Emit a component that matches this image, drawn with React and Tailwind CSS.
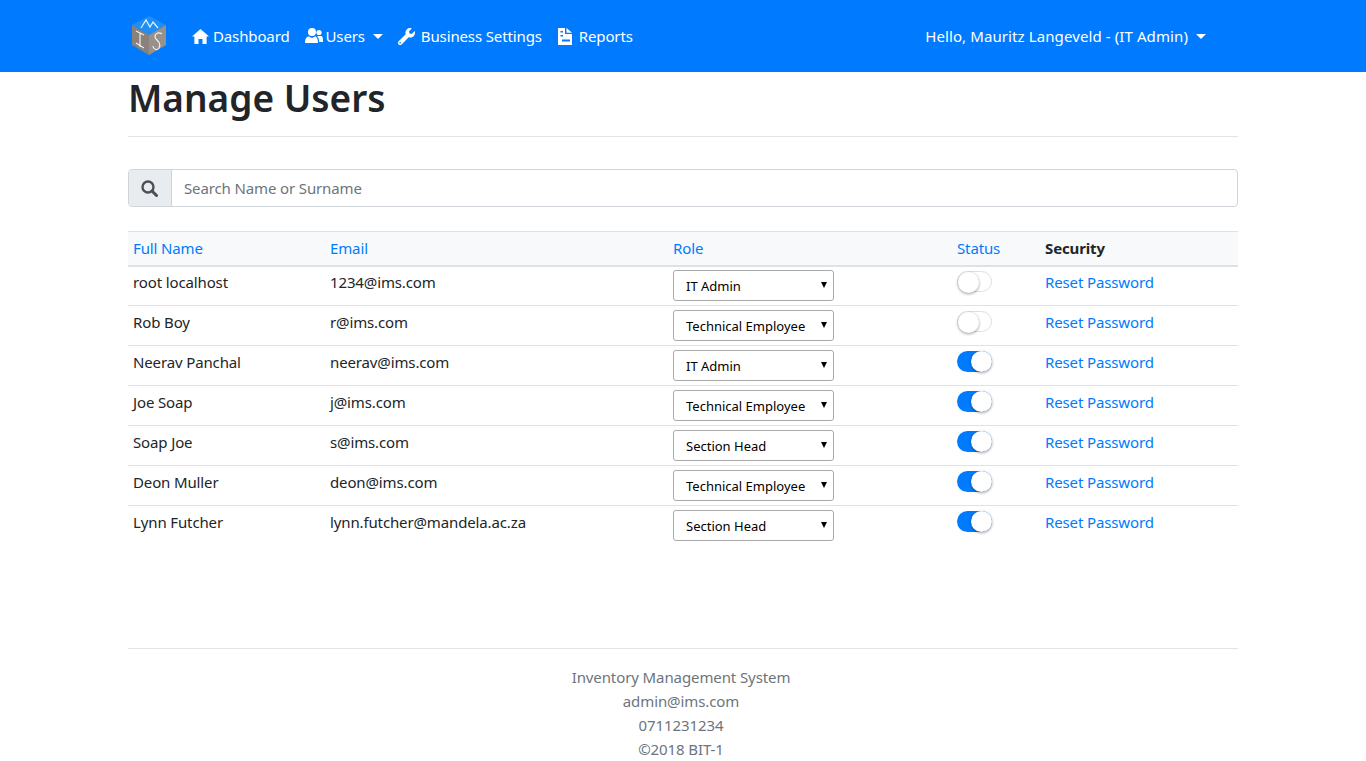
import { FaWrench } from "react-icons/fa";

const USERS = [
  { name: "root localhost", email: "1234@ims.com", role: "IT Admin", active: false },
  { name: "Rob Boy", email: "r@ims.com", role: "Technical Employee", active: false },
  { name: "Neerav Panchal", email: "neerav@ims.com", role: "IT Admin", active: true },
  { name: "Joe Soap", email: "j@ims.com", role: "Technical Employee", active: true },
  { name: "Soap Joe", email: "s@ims.com", role: "Section Head", active: true },
  { name: "Deon Muller", email: "deon@ims.com", role: "Technical Employee", active: true },
  { name: "Lynn Futcher", email: "lynn.futcher@mandela.ac.za", role: "Section Head", active: true },
];

const ROLES = ["IT Admin", "Technical Employee", "Section Head"];

function Logo() {
  return (
    <svg width="36" height="40" viewBox="0 0 36 40" className="shrink-0">
      <polygon points="18,0 35,9 18,19 1,9" fill="#1f8ff5" />
      <polygon points="1,9 18,19 18,39 1,29" fill="#8a817b" />
      <polygon points="35,9 18,19 18,39 35,29" fill="#98908a" />
      <path d="M10 12 L15 4 L19 11 L22 6 L27 12" fill="none" stroke="#e6f3ff" strokeWidth="1.2" />
      <path d="M5 15 L13 19 M9 17 L9 31 M5 27 L13 32" fill="none" stroke="#efefef" strokeWidth="1.2" />
      <path d="M31 18 C27 15 22 19 25 23 C28 26 30 28 28 32 C26 35 22 33 22 30" fill="none" stroke="#efefef" strokeWidth="1.2" />
    </svg>
  );
}

function HomeIcon() {
  return (
    <svg width="17" height="15" viewBox="0 0 17 15" className="mr-[4px] shrink-0" fill="currentColor">
      <path d="M8.5 0 L17 7.6 H14.6 V15 H10.5 V10 H6.5 V15 H2.4 V7.6 H0 Z" />
    </svg>
  );
}

function UsersIcon() {
  return (
    <svg width="18" height="16" viewBox="0 0 18 16" className="mr-[3px] shrink-0" fill="currentColor">
      <circle cx="7" cy="4" r="4" />
      <path d="M0 15 C0 10 2 8.5 4 8.5 L7 10 L10 8.5 C11.5 8.5 13 10 13 15 Z" />
      <circle cx="14" cy="4.5" r="2.6" />
      <path d="M12 8 H16 C17.5 8 18 9.5 18 14 H14.2 C14.2 11.5 13.5 9.5 12 8 Z" />
    </svg>
  );
}

function ReportIcon() {
  return (
    <svg width="14" height="17" viewBox="0 0 14 17" className="mr-[7px] shrink-0">
      <path fillRule="evenodd" fill="currentColor" d="M0 0 H7 V6 H14 V17 H0 Z M2.5 3 V4.5 H5 V3 Z M2.5 7 V8.5 H5 V7 Z M4 11.5 V13.5 H12 V11.5 Z" />
      <path fill="currentColor" d="M8.5 0 L14 4.8 H8.5 Z" />
    </svg>
  );
}

function SearchIcon() {
  return (
    <svg width="17" height="17" viewBox="0 0 17 17" fill="none" stroke="currentColor">
      <circle cx="7" cy="7" r="5.5" strokeWidth="2.4" />
      <path d="M11 11 L15.5 15.5" strokeWidth="3" strokeLinecap="round" />
    </svg>
  );
}

function NavLink({ icon, children, caret, className = "pr-2" }) {
  return (
    <a href="#" className={`flex items-center text-white pl-2 whitespace-nowrap ${className}`}>
      {icon}
      <span>{children}</span>
      {caret ? <Caret /> : null}
    </a>
  );
}

function Caret() {
  return <span className="ml-[8px] inline-block w-0 h-0 border-x-[5px] border-x-transparent border-t-[5px] border-t-white" />;
}

function Toggle({ on }) {
  return (
    <div className={`relative w-[35px] h-[21px] rounded-full ${on ? "bg-[#007bff]" : "bg-white border border-[#dfdfdf]"}`}>
      <div
        className={`absolute top-0 w-[21px] h-[21px] rounded-full bg-white shadow-[0_1px_3px_rgba(0,0,0,0.4)] ${on ? "right-0" : "left-0 -top-px"}`}
      />
    </div>
  );
}

function RoleSelect({ value }) {
  return (
    <div className="relative w-[161px] h-[31px]">
      <select
        defaultValue={value}
        className="appearance-none w-full h-full rounded-[3px] border border-[#a9a9a9] bg-white pl-3 text-[13px] tracking-normal text-black outline-none"
      >
        {ROLES.map((r) => (
          <option key={r}>{r}</option>
        ))}
      </select>
      <span className="absolute right-[7px] top-[12px] w-0 h-0 border-x-[3px] border-x-transparent border-t-[6px] border-t-black" />
    </div>
  );
}

export default function App() {
  return (
    <div className="font-['Noto_Sans',sans-serif] text-[15px] tracking-[-0.13px] leading-6 text-[#212529] bg-white min-h-[761px]">
      <nav className="bg-[#007bff] h-[72px] flex items-center">
        <div className="w-[1110px] mx-auto flex items-center">
          <div className="ml-[3px] mr-[17px]">
            <Logo />
          </div>
          <NavLink icon={<HomeIcon />} className="pr-[7px]">Dashboard</NavLink>
          <NavLink icon={<UsersIcon />} caret className="pr-[7px]">Users</NavLink>
          <NavLink icon={<FaWrench className="w-[17px] h-[17px] mr-[6px]" />}>Business Settings</NavLink>
          <NavLink icon={<ReportIcon />}>Reports</NavLink>
          <a href="#" className="ml-auto mr-[32px] flex items-center text-white tracking-[0.1px]">
            Hello, Mauritz Langeveld - (IT Admin)
            <Caret />
          </a>
        </div>
      </nav>

      <main className="w-[1110px] mx-auto">
        <h1 className="text-[37px] leading-[48px] tracking-normal font-semibold mt-[2px] pb-[14px] border-b border-[#e2e3e5]">Manage Users</h1>

        <div className="flex h-[38px] mt-[32px] rounded-[4px] border border-[#ced4da]">
          <div className="w-[43px] shrink-0 flex items-center justify-center bg-[#e9ecef] border-r border-[#ced4da] rounded-l-[4px] text-[#495057] pr-[2px]">
            <SearchIcon />
          </div>
          <input
            placeholder="Search Name or Surname"
            className="flex-1 px-3 outline-none rounded-r-[4px] placeholder:text-[#6c757d]"
          />
        </div>

        <table className="w-full mt-[24px] border-collapse table-fixed">
          <colgroup>
            <col className="w-[197px]" />
            <col className="w-[343px]" />
            <col className="w-[284px]" />
            <col className="w-[88px]" />
            <col />
          </colgroup>
          <thead>
            <tr className="h-[34px] bg-[#f8f9fa] border-t border-[#dee2e6] border-b-2">
              {["Full Name", "Email", "Role", "Status"].map((h) => (
                <th key={h} className="text-left font-normal px-[5px] pb-[1px] text-[#007bff]">
                  <a href="#">{h}</a>
                </th>
              ))}
              <th className="text-left font-bold px-[5px] pb-[1px]">Security</th>
            </tr>
          </thead>
          <tbody>
            {USERS.map((u) => (
              <tr key={u.name} className="h-[40px] border-t border-[#dee2e6] first:border-t-0">
                <td className="px-[5px] pb-[8px]">{u.name}</td>
                <td className="px-[5px] pb-[8px]">{u.email}</td>
                <td className="px-[5px]"><RoleSelect value={u.role} /></td>
                <td className="px-[5px] pb-[8px]"><Toggle on={u.active} /></td>
                <td className="px-[5px] pb-[8px]"><a href="#" className="text-[#007bff]">Reset Password</a></td>
              </tr>
            ))}
          </tbody>
        </table>

        <footer className="mt-[102px] border-t border-[#e2e3e5] pt-[16px] pr-[4px] text-center text-[#6c757d] tracking-[-0.1px]">
          <p>Inventory Management System</p>
          <p>admin@ims.com</p>
          <p>0711231234</p>
          <p>©2018 BIT-1</p>
        </footer>
      </main>
    </div>
  );
}
